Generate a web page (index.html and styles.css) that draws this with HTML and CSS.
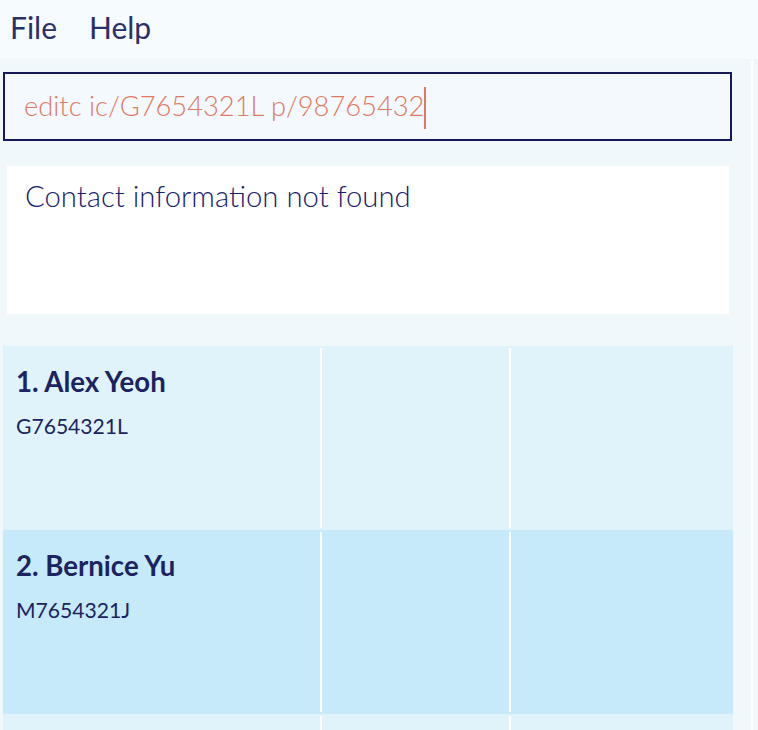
FILE: index.html
```html
<!DOCTYPE html>
<html>
<head>
<meta charset="utf-8">
<link rel="stylesheet" href="styles.css">
</head>
<body>
<div class="menubar">
  <span class="menu-item menu-file">File</span>
  <span class="menu-item">Help</span>
</div>
<div class="workspace">
  <div class="main">
    <div class="command-box">
      <span class="command-text">editc ic/G7654321L p/98765432</span><span class="caret"></span>
    </div>
    <div class="result-box">Contact information not found</div>
    <div class="list">
      <div class="card card-odd">
        <div class="col col-main">
          <div class="name">1. Alex Yeoh</div>
          <div class="ic">G7654321L</div>
        </div>
        <div class="divider"></div>
        <div class="col col-mid"></div>
        <div class="divider"></div>
        <div class="col col-end"></div>
      </div>
      <div class="card card-even">
        <div class="col col-main">
          <div class="name">2. Bernice Yu</div>
          <div class="ic">M7654321J</div>
        </div>
        <div class="divider"></div>
        <div class="col col-mid"></div>
        <div class="divider"></div>
        <div class="col col-end"></div>
      </div>
      <div class="card card-odd">
        <div class="col col-main"></div>
        <div class="divider"></div>
        <div class="col col-mid"></div>
        <div class="divider"></div>
        <div class="col col-end"></div>
      </div>
    </div>
  </div>
  <div class="split"></div>
  <div class="side"></div>
</div>
</body>
</html>
```
FILE: styles.css
```css
html, body {
  margin: 0;
  padding: 0;
  height: 730px;
  overflow: hidden;
  background: #f0f8fc;
  font-family: "Lato", "Open Sans", sans-serif;
}

.menubar {
  height: 59px;
  box-sizing: border-box;
  padding: 9px 0 0 10px;
  background: #f6fbfd;
  display: flex;
  align-items: flex-start;
}

.menu-item {
  font-size: 30px;
  font-weight: 400;
  line-height: 36px;
  color: #2a3068;
}

.menu-file {
  width: 79px;
}

.workspace {
  display: flex;
  height: 671px;
  overflow: hidden;
}

.main {
  width: 751px;
  display: flex;
  flex-direction: column;
  align-items: flex-start;
  overflow: hidden;
}

.split {
  width: 2px;
  margin-top: 2px;
  background: #ffffff;
}

.side {
  flex: 1;
}

.command-box {
  flex-shrink: 0;
  margin: 13px 0 0 3px;
  width: 729px;
  height: 69px;
  box-sizing: border-box;
  border: 2px solid #141a58;
  background: #f3f9fc;
  padding: 16px 0 0 19px;
  display: flex;
  align-items: flex-start;
}

.command-text {
  font-size: 27.3px;
  font-weight: 300;
  line-height: 32px;
  color: #de7a64;
  white-space: pre;
}

.caret {
  width: 2px;
  height: 42px;
  margin-top: -3px;
  background: #de7a64;
}

.result-box {
  flex-shrink: 0;
  margin: 25px 0 0 7px;
  width: 722px;
  height: 148px;
  box-sizing: border-box;
  background: #ffffff;
  padding: 12px 0 0 18px;
  font-size: 29.3px;
  font-weight: 300;
  line-height: 35px;
  color: #17206b;
}

.list {
  flex: 1;
  min-height: 0;
  overflow: hidden;
  margin: 32px 0 0 3px;
  width: 730px;
  display: flex;
  flex-direction: column;
}

.card {
  flex-shrink: 0;
  height: 184px;
  display: flex;
}

.card-odd {
  background: #e0f3fa;
}

.card-even {
  background: #c6eaf9;
}

.col-main {
  width: 317px;
  box-sizing: border-box;
  padding: 19px 0 0 13px;
}

.col-mid {
  width: 187px;
}

.col-end {
  width: 222px;
}

.divider {
  width: 2px;
  margin: 2px 0;
  background: #ffffff;
}

.name {
  font-size: 27.6px;
  font-weight: 700;
  line-height: 33px;
  color: #1b2360;
  white-space: nowrap;
}

.ic {
  margin-top: 15px;
  font-size: 21.1px;
  font-weight: 400;
  line-height: 25px;
  color: #1b2360;
}
```
